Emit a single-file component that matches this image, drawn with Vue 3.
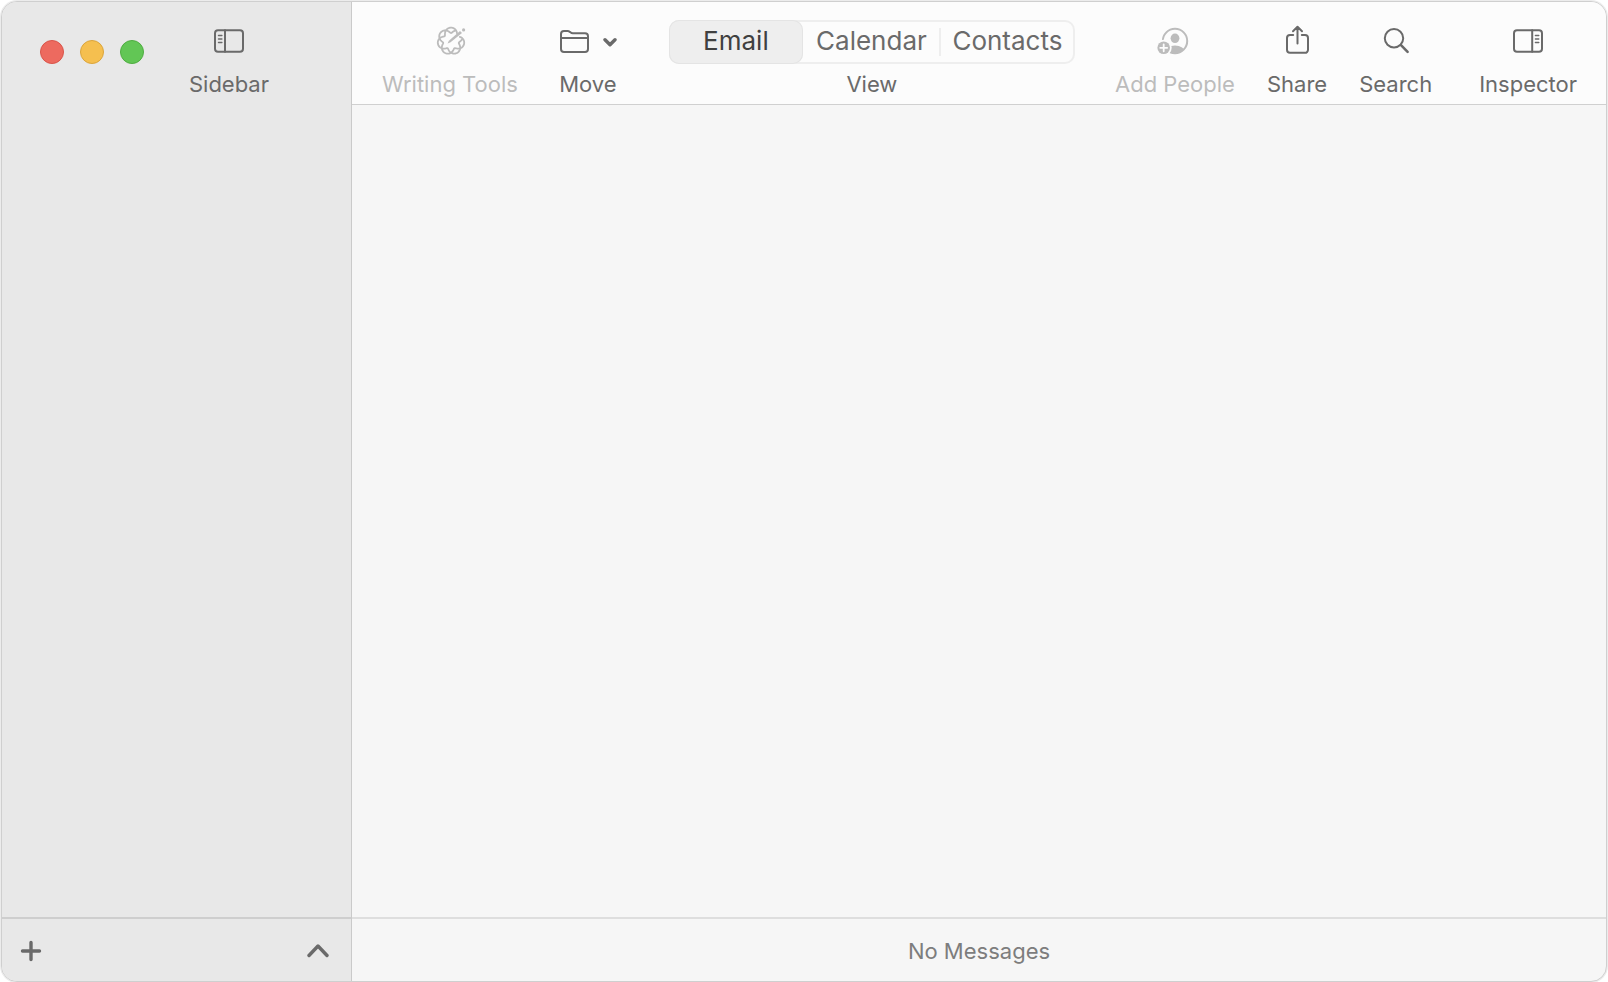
<script setup>
import { ref } from 'vue'

const views = ['Email', 'Calendar', 'Contacts']
const activeView = ref('Email')

// Seven-lobed knot, left open where the pencil crosses it.
function knotPath(cx, cy) {
  let d = ''
  let drawing = false
  for (let deg = -58; deg <= 662; deg += 3) {
    const local = (((deg + 58) % 360) + 360) % 360
    if (local > 0 && local < 38) {
      drawing = false
      continue
    }
    const a = (deg * Math.PI) / 180
    const phase = 3.5 * (a + Math.PI / 2)
    // The tangential swing rounds off the tips of the lobes.
    const r = 10.7 + 2.7 * Math.cos(phase)
    const t = a + 0.12 * Math.sin(phase)
    const x = (cx + r * Math.cos(t)).toFixed(2)
    const y = (cy + r * Math.sin(t)).toFixed(2)
    d += `${drawing ? 'L' : 'M'}${x} ${y}`
    drawing = true
  }
  return d
}
const knot = knotPath(21, 19)
</script>

<template>
  <div class="window">
    <aside class="sidebar">
      <header class="sidebar-head">
        <div class="lights">
          <button class="light red" aria-label="Close"></button>
          <button class="light yellow" aria-label="Minimize"></button>
          <button class="light green" aria-label="Zoom"></button>
        </div>
        <button class="tool">
          <span class="icon">
            <svg width="40" height="40" viewBox="0 0 40 40">
              <rect x="6" y="8.2" width="28" height="21.6" rx="3" />
              <path d="M16 8.2v21.6" />
              <path class="thin" d="M9.5 13.5h3.4M9.5 17h3.4M9.5 20.5h3.4" />
            </svg>
          </span>
          <span class="label">Sidebar</span>
        </button>
      </header>
      <nav class="folders" aria-label="Folders"></nav>
      <footer class="foot sidebar-foot">
        <button class="plain" aria-label="Add">
          <svg class="bold" width="22" height="22" viewBox="0 0 22 22">
            <path d="M11 2.5v17M2.5 11h17" />
          </svg>
        </button>
        <button class="plain" aria-label="Expand">
          <svg class="bold" width="22" height="22" viewBox="0 0 22 22">
            <path d="M2 15.5l9-9.5 9 9.5" />
          </svg>
        </button>
      </footer>
    </aside>

    <div class="content">
      <header class="toolbar">
        <button class="tool writing" disabled>
          <span class="icon">
            <svg width="40" height="40" viewBox="0 0 40 40">
              <path class="knot" :d="knot" />
              <path class="solid" d="M17.6 21.6l1.3-2.9L30 9.1l2 2-11.4 9.2z" />
              <circle class="solid" cx="33.6" cy="7.9" r="1.6" />
            </svg>
          </span>
          <span class="label">Writing Tools</span>
        </button>
        <button class="tool move">
          <span class="icon move-icon">
            <svg width="30" height="40" viewBox="0 0 30 40">
              <path d="M2 12a3 3 0 0 1 3-3h3.6c1 0 1.6.3 2.3.9l.8.6c.6.5 1.2.7 2.1.7H26a3 3 0 0 1 3 3V27a3 3 0 0 1-3 3H5a3 3 0 0 1-3-3zM2 16h27" />
            </svg>
            <svg class="bold" width="14" height="40" viewBox="0 0 14 40">
              <path d="M2 17.8l5 5 5-5" />
            </svg>
          </span>
          <span class="label">Move</span>
        </button>
        <div class="view">
          <div class="segments" role="group" aria-labelledby="view-label">
            <button
              v-for="v in views"
              :key="v"
              class="segment"
              :class="{ active: v === activeView }"
              :aria-pressed="v === activeView"
              @click="activeView = v"
            >{{ v }}</button>
          </div>
          <span id="view-label" class="label">View</span>
        </div>
        <div class="trailing">
          <button class="tool" disabled>
            <span class="icon">
              <svg width="40" height="40" viewBox="0 0 40 40">
                <defs>
                  <clipPath id="person-clip"><circle cx="20" cy="19" r="12.2" /></clipPath>
                </defs>
                <circle cx="20" cy="19" r="12.2" />
                <ellipse class="solid" cx="20" cy="16.3" rx="4.4" ry="4.8" />
                <ellipse class="solid" cx="20" cy="30" rx="10" ry="6.4" clip-path="url(#person-clip)" />
                <circle class="halo" cx="8.7" cy="25.8" r="8" />
                <circle class="solid" cx="8.7" cy="25.8" r="6.3" />
                <path class="cross" d="M8.7 22.3v7M5.2 25.8h7" />
              </svg>
            </span>
            <span class="label">Add People</span>
          </button>
          <button class="tool">
            <span class="icon">
              <svg width="40" height="40" viewBox="0 0 40 40">
                <path d="M16.2 13H13a3 3 0 0 0-3 3v11.8a3 3 0 0 0 3 3h15a3 3 0 0 0 3-3V16a3 3 0 0 0-3-3h-3.2M20.5 21.5V5M16 9.2l4.5-4.5L25 9.2" />
              </svg>
            </span>
            <span class="label">Share</span>
          </button>
          <button class="tool">
            <span class="icon">
              <svg width="40" height="40" viewBox="0 0 40 40">
                <circle cx="18" cy="16.2" r="9.2" />
                <path class="handle" d="M25 23.2l6.6 6.6" />
              </svg>
            </span>
            <span class="label">Search</span>
          </button>
          <button class="tool inspector">
            <span class="icon">
              <svg width="40" height="40" viewBox="0 0 40 40">
                <rect x="6" y="8.2" width="28" height="21.6" rx="3" />
                <path d="M24.2 8.2v21.6" />
                <path class="thin" d="M27.4 13.5h3.4M27.4 17h3.4M27.4 20.5h3.4" />
              </svg>
            </span>
            <span class="label">Inspector</span>
          </button>
        </div>
      </header>
      <main class="messages"></main>
      <footer class="foot status">No Messages</footer>
    </div>
  </div>
</template>

<style>
html,
body {
  background: #fff;
}
</style>

<style scoped>
.window {
  box-sizing: border-box;
  display: flex;
  min-height: calc(100vh - 1px);
  margin: 1px 1px 0;
  border: 1px solid #cfcfcf;
  border-radius: 16px;
  box-shadow: 0 0 0 1px #ececec;
  overflow: hidden;
  background: #f6f6f6;
  font-family: Inter, "Liberation Sans", sans-serif;
  font-size: 22px;
  line-height: 24px;
  color: #6a6a6a;
}
button {
  margin: 0;
  padding: 0;
  border: 0;
  background: none;
  font: inherit;
  color: inherit;
}
svg {
  display: block;
  fill: none;
  stroke: currentColor;
  stroke-width: 2;
  stroke-linecap: round;
  stroke-linejoin: round;
}
.bold {
  stroke-width: 3.4;
}
.thin {
  stroke-width: 1.4;
}
.knot {
  stroke-width: 1.8;
}
.handle {
  stroke-width: 2.6;
}
.solid {
  fill: currentColor;
  stroke: none;
}
.halo {
  fill: #fcfcfc;
  stroke: none;
}
.cross {
  stroke: #fcfcfc;
  stroke-width: 1.8;
}
.sidebar {
  box-sizing: border-box;
  flex: none;
  display: flex;
  flex-direction: column;
  width: 350px;
  border-right: 1px solid #cacaca;
  background: #e8e8e8;
}
.sidebar-head {
  display: flex;
  justify-content: space-between;
  padding: 18px 82px 8px 38px;
}
.lights {
  display: flex;
  gap: 16px;
  padding-top: 20px;
}
.light {
  box-sizing: border-box;
  width: 24px;
  height: 24px;
  border: 1px solid;
  border-radius: 50%;
}
.red {
  background: #ed6a5f;
  border-color: #d9554a;
}
.yellow {
  background: #f5bf4f;
  border-color: #dba53c;
}
.green {
  background: #62c655;
  border-color: #4fad41;
}
.tool,
.view {
  display: flex;
  flex-direction: column;
  align-items: center;
  gap: 8px;
}
.tool:disabled {
  color: #bcbcbc;
}
.icon {
  display: flex;
  align-items: center;
  height: 44px;
}
.move-icon {
  gap: 14px;
}
.label {
  white-space: nowrap;
}
.folders,
.messages {
  flex: 1;
}
.foot {
  box-sizing: border-box;
  display: flex;
  align-items: center;
  height: 64px;
  padding-top: 2px;
  border-top: 2px solid #dedede;
}
.sidebar-foot {
  justify-content: space-between;
  padding-left: 18px;
  padding-right: 22px;
  border-color: #cecece;
}
.content {
  flex: 1;
  display: flex;
  flex-direction: column;
  min-width: 0;
}
.toolbar {
  display: flex;
  padding: 18px 29px 8px 30px;
  border-bottom: 1px solid #d0d0d0;
  background: #fcfcfc;
}
.move {
  margin-left: 41px;
}
.view {
  margin-left: 52px;
}
.segments {
  box-sizing: border-box;
  display: grid;
  grid-template-columns: 134px 137px 135px;
  width: 406px;
  height: 44px;
  border-radius: 10px;
  box-shadow: inset 0 0 0 2px #eeeeee;
}
.segment {
  position: relative;
  border-radius: 10px;
  font-size: 26px;
  line-height: 32px;
  padding-bottom: 2px;
}
.segment.active {
  background: #eeeeee;
  box-shadow: inset 0 0 0 1px #e4e4e4;
  color: #404040;
}
.segment + .segment:not(.active):last-child::before {
  content: "";
  position: absolute;
  left: -1px;
  top: 8px;
  width: 2px;
  height: 28px;
  background: #eeeeee;
}
.trailing {
  display: flex;
  gap: 32px;
  margin-left: auto;
}
.inspector {
  margin-left: 15px;
}
.status {
  justify-content: center;
  color: #7d7d7d;
}
</style>
